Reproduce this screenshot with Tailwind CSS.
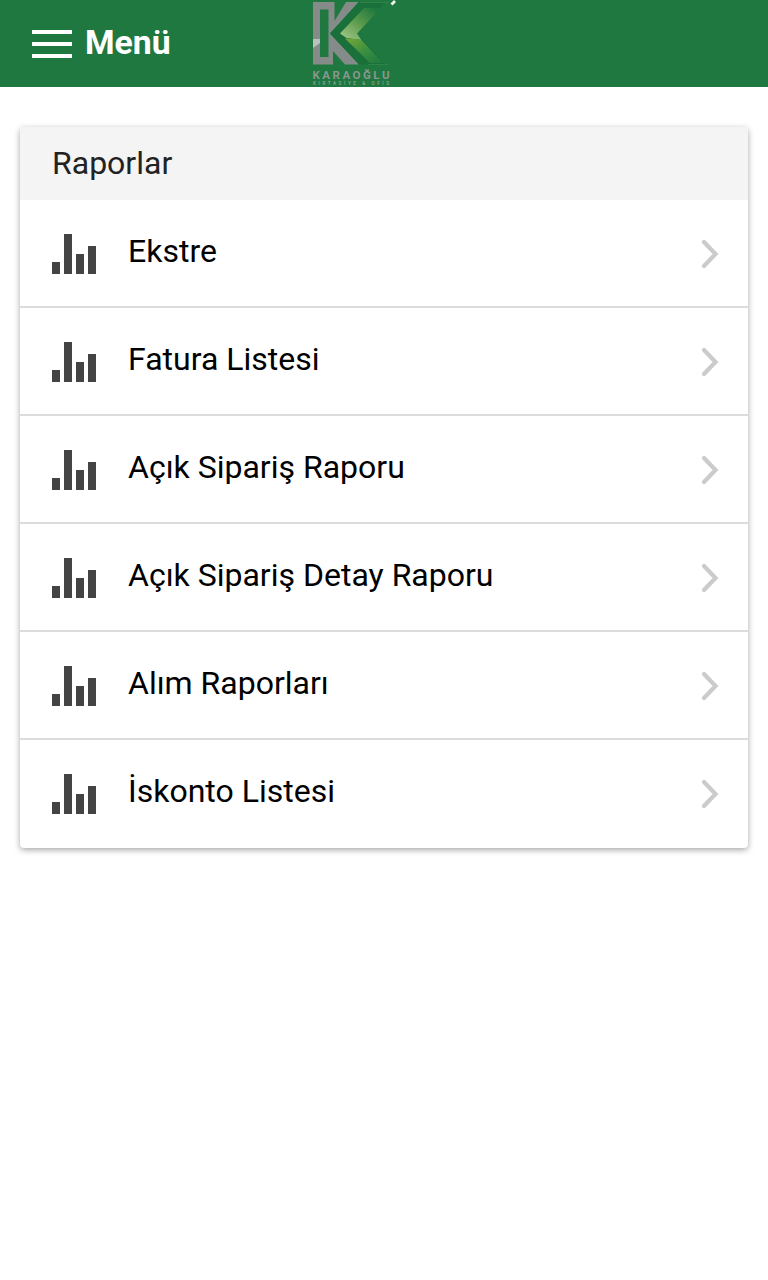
<!DOCTYPE html>
<html lang="tr">
<head>
    <meta charset="UTF-8">
    <meta name="viewport" content="width=device-width, initial-scale=1.0">
    <title>Raporlar</title>
    <script src="https://cdn.jsdelivr.net/npm/@tailwindcss/browser@4"></script>
</head>
<body class="bg-white min-h-screen font-['Roboto',sans-serif] text-black">

    <!-- Icons -->
    <svg class="hidden">
        <symbol id="bars" viewBox="0 0 44 40">
            <path d="M0 28h8v12H0zM12 0h8v40h-8zM24 20h8v20h-8zM36 12h8v28h-8z" fill="#444"/>
        </symbol>
        <symbol id="arrow" viewBox="0 0 18 30">
            <path d="M3 3l11.500 12L3 27" fill="none" stroke="#cbcbcb" stroke-width="4.200" stroke-linecap="round"/>
        </symbol>
    </svg>

    <!-- Top Bar -->
    <header class="flex h-[87px] bg-[#1f783f]">
        <a href="#" class="flex h-[87px] w-[313px] items-center pl-8 text-white">
            <svg class="h-7 w-10" viewBox="0 0 40 28"><path d="M0 0h40v4H0zM0 12h40v4H0zM0 24h40v4H0z" fill="#fff"/></svg>
            <span class="ml-[13px] pb-[1px] text-[33.800px] leading-10 font-bold">Menü</span>
        </a>
        <svg class="h-[87px] w-[86px]" viewBox="313 0 86 87">
            <defs>
                <linearGradient id="upper" x1="1" y1="0" x2="0" y2="1">
                    <stop offset="0.1" stop-color="#1f783f"/>
                    <stop offset="0.5" stop-color="#5b9a4c"/>
                    <stop offset="1" stop-color="#a9cd8d"/>
                </linearGradient>
                <linearGradient id="lower" x1="0" y1="0" x2="1" y2="1">
                    <stop offset="0" stop-color="#78a838"/>
                    <stop offset="0.5" stop-color="#3c9040"/>
                    <stop offset="1" stop-color="#1f783f"/>
                </linearGradient>
            </defs>
            <path d="M313 2h21.500v19L346 2h12.500L330 33.500l29 31h-14L333 51v13.500h-20z" fill="#858b89"/>
            <path d="M320 9.500h8.500V57H320z" fill="#1f783f"/>
            <path d="M313 48l7-5v-4h-7z" fill="#b9c2bd"/>
            <path d="M359 2h26L357 33.500l28 31h-26L330 33.500z" fill="#19703a"/>
            <path d="M364 8h17l-24 25.500 4.500 6.500-15-2-6.500-4.500z" fill="url(#upper)"/>
            <path d="M345 38.500l16 1L383 63h-13z" fill="url(#lower)"/>
            <path d="M360 2.500h29M368 64.500h20" stroke="#3f8b50" stroke-width="0.600"/>
            <path d="M391.500 4.500l3.500-3.500" stroke="#f0f5f1" stroke-width="2.800"/>
            <text x="312.500" y="79" textLength="77" font-size="11.500" font-weight="700" fill="#8b9690">KARAOĞLU</text>
            <text x="313" y="85" textLength="76" font-size="4.500" font-weight="700" fill="#83a18c">KIRTASİYE &amp; OFİS</text>
        </svg>
    </header>

    <!-- Reports -->
    <main class="px-5 pt-10">
        <section class="h-[721px] overflow-hidden rounded-[4px] bg-white shadow-[0_2px_6px_rgba(0,0,0,0.35)]">
            <h1 class="h-[73px] bg-[#f4f4f4] pl-8 text-[32px] leading-[73px] text-[#222]">Raporlar</h1>
            <ul class="text-[32px]">
                <li class="border-b-2 border-[#dcdcdc]">
                    <a href="#" class="flex h-[106px] items-center pr-[29px] pl-8">
                        <svg class="mt-0.5 h-10 w-11"><use href="#bars"/></svg>
                        <span class="ml-8 flex-1 pb-1">Ekstre</span>
                        <svg class="mt-0.5 h-[30px] w-[18px]"><use href="#arrow"/></svg>
                    </a>
                </li>
                <li class="border-b-2 border-[#dcdcdc]">
                    <a href="#" class="flex h-[106px] items-center pr-[29px] pl-8">
                        <svg class="mt-0.5 h-10 w-11"><use href="#bars"/></svg>
                        <span class="ml-8 flex-1 pb-1">Fatura Listesi</span>
                        <svg class="mt-0.5 h-[30px] w-[18px]"><use href="#arrow"/></svg>
                    </a>
                </li>
                <li class="border-b-2 border-[#dcdcdc]">
                    <a href="#" class="flex h-[106px] items-center pr-[29px] pl-8">
                        <svg class="mt-0.5 h-10 w-11"><use href="#bars"/></svg>
                        <span class="ml-8 flex-1 pb-1">Açık Sipariş Raporu</span>
                        <svg class="mt-0.5 h-[30px] w-[18px]"><use href="#arrow"/></svg>
                    </a>
                </li>
                <li class="border-b-2 border-[#dcdcdc]">
                    <a href="#" class="flex h-[106px] items-center pr-[29px] pl-8">
                        <svg class="mt-0.5 h-10 w-11"><use href="#bars"/></svg>
                        <span class="ml-8 flex-1 pb-1">Açık Sipariş Detay Raporu</span>
                        <svg class="mt-0.5 h-[30px] w-[18px]"><use href="#arrow"/></svg>
                    </a>
                </li>
                <li class="border-b-2 border-[#dcdcdc]">
                    <a href="#" class="flex h-[106px] items-center pr-[29px] pl-8">
                        <svg class="mt-0.5 h-10 w-11"><use href="#bars"/></svg>
                        <span class="ml-8 flex-1 pb-1">Alım Raporları</span>
                        <svg class="mt-0.5 h-[30px] w-[18px]"><use href="#arrow"/></svg>
                    </a>
                </li>
                <li>
                    <a href="#" class="flex h-[106px] items-center pr-[29px] pl-8">
                        <svg class="mt-0.5 h-10 w-11"><use href="#bars"/></svg>
                        <span class="ml-8 flex-1 pb-1">İskonto Listesi</span>
                        <svg class="mt-0.5 h-[30px] w-[18px]"><use href="#arrow"/></svg>
                    </a>
                </li>
            </ul>
        </section>
    </main>

</body>
</html>
